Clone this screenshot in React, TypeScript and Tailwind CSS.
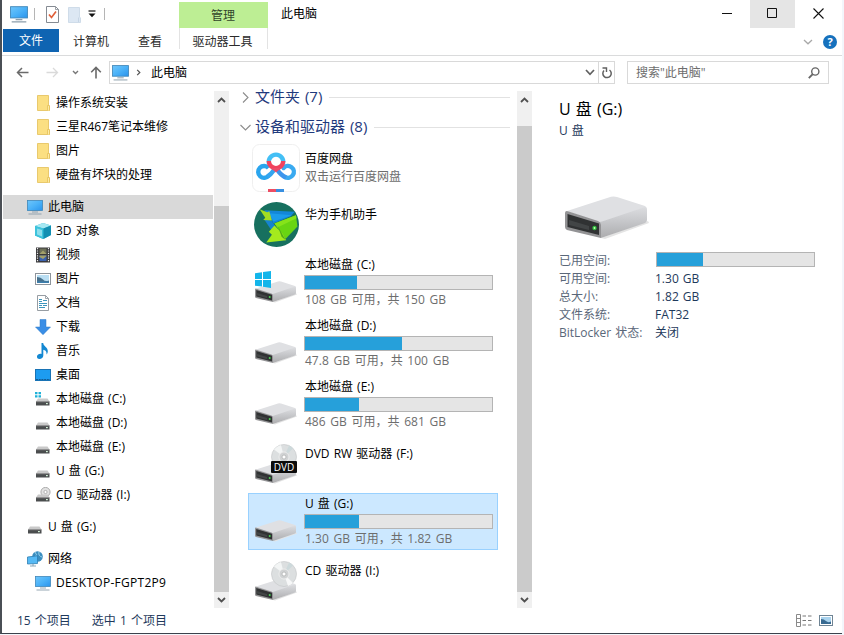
import type { ReactNode } from "react";
import clsx from "clsx";

function Monitor({ className }: { className?: string }) {
  return (
    <svg viewBox="0 0 16 16" className={clsx("shrink-0", className)}>
      <defs>
        <linearGradient id="screen" x1="0" y1="0" x2="1" y2="1">
          <stop offset="0" stopColor="#6fc6fb" />
          <stop offset="0.5" stopColor="#4bb2f8" />
          <stop offset="1" stopColor="#2a93ec" />
        </linearGradient>
      </defs>
      <rect x="0.5" y="1.5" width="15" height="10" fill="url(#screen)" stroke="#4087b8" strokeWidth="0.8" />
      <path d="M5 13h6M1.5 15h13" stroke="#8b9dab" strokeWidth="0.9" />
    </svg>
  );
}

// Drawn in an 84x44 box so that it can be placed inside the larger icons too
function DriveShape() {
  return (
    <g>
      <defs>
        <linearGradient id="driveSide" x1="0" y1="0" x2="0" y2="1">
          <stop offset="0" stopColor="#dcdde0" />
          <stop offset="0.5" stopColor="#c4c5c8" />
          <stop offset="1" stopColor="#acacae" />
        </linearGradient>
      </defs>
      <path d="M36 42 83 25 84 27 40 43Z" fill="#e4e4e4" />
      <path d="M2 15 46 .8Q49 0 52 1L80 10Q82 11 82 14L37 28 33 26Z" fill="#dfe0e3" />
      <path d="M34 26Q37 25.500 40 24.500L80 11Q82 11.500 82 14V24Q82 26 80 27L36 42Z" fill="url(#driveSide)" />
      <path d="M0 17Q0 14.500 3 15.300L33 25Q36 26.500 36 29V42L2 34Q0 33 0 31Z" fill="#939395" />
      <path d="M2.500 18 34 27.500V39L2.500 31Z" fill="#303233" />
      <path d="M4 24 24 30V34L4 29Z" fill="#424546" />
      <circle cx="29.500" cy="32" r="2.200" fill="#2fbd3c" />
      <circle cx="29.500" cy="32" r="0.900" fill="#c6ffb8" />
    </g>
  );
}

function Disc() {
  return (
    <g>
      <circle cx="31" cy="22" r="12.500" fill="#dcdfe0" stroke="#c2c5c6" strokeWidth="0.600" />
      <path d="M31 22 21 14.500A12.500 12.500 0 0 1 28 9.900Z" fill="#f3f5f5" />
      <path d="M31 22 40 31A12.500 12.500 0 0 1 35 34Z" fill="#f7f8f8" />
      <path d="M31 22 36 10.500A12.500 12.500 0 0 1 40 13.500Z" fill="#cdd9db" />
      <circle cx="31" cy="22" r="5" fill="#d0d2d3" stroke="#f0f0f0" strokeWidth="0.800" />
      <circle cx="31" cy="22" r="2" fill="#fff" stroke="#aaadae" strokeWidth="0.700" />
    </g>
  );
}

function DriveIcon({ kind }: { kind?: string }) {
  return (
    <svg viewBox="0 0 44 50" className="h-[50px] w-[44px]">
      <g transform="translate(2 27) scale(.5)">
        <DriveShape />
      </g>
      {(kind === "cd" || kind === "dvd") && <Disc />}
      {kind === "dvd" && (
        <>
          <rect x="18" y="26" width="26" height="12" rx="1" fill="#0c0c0c" />
          <text x="31" y="35.500" textAnchor="middle" fontSize="10" fill="#fff" fontFamily="Open Sans, sans-serif">
            DVD
          </text>
        </>
      )}
      {kind === "windows" && (
        <path d="M2 19.200 9 18.200V25H2ZM10 18.100 18 17V25H10ZM2 26H9V32.600L2 31.700ZM10 26H18V34L10 32.800Z" fill="#13b5ea" />
      )}
    </svg>
  );
}

function BaiduIcon() {
  return (
    <svg viewBox="0 0 48 48" className="h-12 w-12">
      <rect x="0.500" y="0.500" width="47" height="47" rx="7" fill="#fff" stroke="#efefef" />
      <g fill="none" strokeWidth="4.400">
        <path d="M16.800 31.500A5.900 5.900 0 1 1 16.500 24" stroke="#2aa5ee" />
        <path d="M31.500 24A5.900 5.900 0 1 1 33 33" stroke="#3aaaf0" strokeLinecap="round" />
        <path d="M15.500 32.500Q19 30.500 22 26" stroke="#35a5ef" />
        <path d="M25.500 26Q29 31.500 34 33.500" stroke="#3d95ec" />
        <path d="M17 19.500A7.200 7.200 0 1 1 31 19.500" stroke="#43bff5" />
        <path d="M16.800 17A7.200 7.200 0 0 0 31.200 17" stroke="#f0435e" />
      </g>
      <path d="M19 24 24 28.500 29 24Z" fill="#ec4b69" />
      <path d="M16 45H24V48H16Z" fill="#ed4d63" />
      <path d="M24 45H32V48H24Z" fill="#388fe0" />
    </svg>
  );
}

function HuaweiIcon() {
  return (
    <svg viewBox="0 0 44 44" className="h-[45px] w-[45px]">
      <circle cx="22" cy="22" r="22" fill="#17705f" />
      <path d="M10 8 40 9.500 36 14 19 21 15 14Z" fill="#1387d8" />
      <path d="M15 11 37 13 19 19Z" fill="#1b9cea" />
      <path d="M10 17 17 18 21 24 18 29Z" fill="#1583cf" />
      <path d="M20 21 41 13 42.500 24 31 36 24 27Z" fill="#68d512" />
      <path d="M20 21 41 13 41.500 16 23 25Z" fill="#86e31a" />
      <path d="M5.500 7 13 10 15 9 17.500 18 9 17.500 11 15.500Z" fill="#a4dc22" />
      <path d="M20 23 28 31 31.500 37.500 12 39.500 17.500 32 14.500 29Z" fill="#a5ea1d" />
      <path d="M23 23 31 37.500 27 34Z" fill="#4eae16" />
    </svg>
  );
}

function SmallDrive({ kind }: { kind?: string }) {
  return (
    <svg viewBox="0 0 16 16" className="h-4 w-4">
      {kind === "cd" && (
        <>
          <circle cx="10.500" cy="5" r="4.600" fill="#e2e2e2" stroke="#9a9a9a" strokeWidth="0.800" />
          <circle cx="10.500" cy="5" r="1.600" fill="#fff" stroke="#9a9a9a" strokeWidth="0.700" />
        </>
      )}
      {kind === "windows" && <path d="M0 1H2.500V3.300H0ZM3.500 1H6V3.300H3.500ZM0 4.300H2.500V6.600H0ZM3.500 4.300H6V6.600H3.500Z" fill="#1fb1d8" />}
      <path d="M3 7.500H12.500L14.500 10.500H1Z" fill="#c9c9c9" />
      <path d="M1 10.500H14.500V14.500H1Z" fill="#4a4d4e" />
      <path d="M1 10.500H14.500V11.200H1Z" fill="#8a8a8a" />
      <rect x="11" y="12" width="1.800" height="1.200" fill="#d8f5dc" />
    </svg>
  );
}

const icons: Record<string, ReactNode> = {
  folder: (
    <svg viewBox="0 0 16 16" className="h-4 w-4">
      <path d="M2.500 .5H13.500V11L14.500 11.500V15.500H2.500Z" fill="#fbdf82" stroke="#e3bf58" strokeWidth="0.800" />
      <path d="M12.500 15.500V10.500H14.500V15.500" fill="#fdeaa4" stroke="#e3bf58" strokeWidth="0.800" />
    </svg>
  ),
  pc: <Monitor className="h-4 w-4" />,
  cube: (
    <svg viewBox="0 0 16 16" className="h-4 w-4">
      <path d="M0 3 8 0 16 2.500V12L8 16 0 12.500Z" fill="#28b2cf" />
      <path d="M0 3 8 0 16 2.500 8.500 5.500Z" fill="#a6e8f2" />
      <path d="M0 3 8.500 5.500V16L0 12.500Z" fill="#3cc3dc" />
      <path d="M2 5.500 7 7V13.500L2 11.500Z" fill="#8cdeec" />
      <path d="M8.500 5.500 16 2.500V12L8.500 16Z" fill="#128fb2" />
    </svg>
  ),
  video: (
    <svg viewBox="0 0 16 16" className="h-4 w-4">
      <rect x="1" y="0.500" width="14" height="15" fill="#3a3a3c" />
      <path d="M2.500 1V15M13.500 1V15" stroke="#eee" strokeWidth="1.200" strokeDasharray="1.200 1.200" />
      <rect x="4.500" y="1.500" width="7" height="5.500" fill="#6d7058" />
      <rect x="4.500" y="8.500" width="7" height="5.500" fill="#3a62b0" />
      <path d="M4.500 7 8 3.500 11.500 7ZM4.500 10 8 12 11.500 9V8.500H4.500Z" fill="#a3a06a" />
    </svg>
  ),
  picture: (
    <svg viewBox="0 0 16 16" className="h-4 w-4">
      <rect x="0.500" y="2.500" width="15" height="11" fill="#fff" stroke="#8d949b" />
      <rect x="2" y="4" width="12" height="8" fill="#b9def3" />
      <path d="M2 6Q6 6 8 8.500T14 9.500V12H2Z" fill="#46708c" />
      <path d="M2 10.500H14V12H2Z" fill="#3c7fae" />
    </svg>
  ),
  doc: (
    <svg viewBox="0 0 16 16" className="h-4 w-4">
      <path d="M2.500 .5H10.500L13.500 3.500V15.500H2.500Z" fill="#fff" stroke="#8b9299" strokeWidth="0.900" />
      <path d="M10.500 .5V3.500H13.500" fill="none" stroke="#8b9299" strokeWidth="0.800" />
      <path d="M4 4.500H7M8 5.500H12M4 6.500H7M4 8.500H12M4 10.500H7M8 10.500H12M4 12.500H10" stroke="#3c96bd" strokeWidth="1" />
    </svg>
  ),
  download: (
    <svg viewBox="0 0 16 16" className="h-4 w-4">
      <path d="M5 .5H11V8H15.500L8 15.700 .5 8H5Z" fill="#3a8ee6" stroke="#2d78c6" strokeWidth="0.500" />
    </svg>
  ),
  music: (
    <svg viewBox="0 0 16 16" className="h-4 w-4">
      <path d="M6.500 0H8.200C8.500 3.500 13 4 12.800 8.500 12.700 10 12 11 11.500 11.500 12 8.500 10 7 8.300 6.800V12.500C8.300 14.700 6.500 16 4.500 16S1.800 14.800 2 13.300C2.300 11.500 4.500 10.400 6.500 11Z" fill="#1488d2" />
    </svg>
  ),
  desktop: (
    <svg viewBox="0 0 16 16" className="h-4 w-4">
      <rect x="0.500" y="2.500" width="15" height="11" fill="#1d9cf0" stroke="#1873b5" />
      <path d="M1 12.500H15" stroke="#135c94" strokeDasharray="2 .7" />
    </svg>
  ),
  windows: <SmallDrive kind="windows" />,
  drive: <SmallDrive />,
  cd: <SmallDrive kind="cd" />,
  network: (
    <svg viewBox="0 0 16 16" className="h-4 w-4">
      <circle cx="10.500" cy="5.500" r="5.300" fill="#3a8ec0" />
      <path d="M8 1Q11 4 8 6M12 1Q11 5 15 6" stroke="#a6d8ee" strokeWidth="0.900" fill="none" />
      <path d="M.5 6 10.500 4.800V12.500L.5 13Z" fill="#55b9f4" stroke="#2f7fb3" strokeWidth="0.800" />
      <path d="M3 15H9M6 13V15" stroke="#7d9db0" strokeWidth="0.900" />
    </svg>
  ),
};

const tree = [
  { icon: "folder", label: "操作系统安装", depth: 1 },
  { icon: "folder", label: "三星R467笔记本维修", depth: 1 },
  { icon: "folder", label: "图片", depth: 1 },
  { icon: "folder", label: "硬盘有坏块的处理", depth: 1 },
  { icon: "pc", label: "此电脑", depth: 0, active: true },
  { icon: "cube", label: "3D 对象", depth: 1 },
  { icon: "video", label: "视频", depth: 1 },
  { icon: "picture", label: "图片", depth: 1 },
  { icon: "doc", label: "文档", depth: 1 },
  { icon: "download", label: "下载", depth: 1 },
  { icon: "music", label: "音乐", depth: 1 },
  { icon: "desktop", label: "桌面", depth: 1 },
  { icon: "windows", label: "本地磁盘 (C:)", depth: 1 },
  { icon: "drive", label: "本地磁盘 (D:)", depth: 1 },
  { icon: "drive", label: "本地磁盘 (E:)", depth: 1 },
  { icon: "drive", label: "U 盘 (G:)", depth: 1 },
  { icon: "cd", label: "CD 驱动器 (I:)", depth: 1 },
  { icon: "drive", label: "U 盘 (G:)", depth: 0 },
  { icon: "network", label: "网络", depth: 0 },
  { icon: "pc", label: "DESKTOP-FGPT2P9", depth: 1, spaced: true },
];

const drives = [
  { name: "本地磁盘 (C:)", kind: "windows", used: 28, info: "108 GB 可用，共 150 GB", height: "h-[61px]" },
  { name: "本地磁盘 (D:)", used: 52, info: "47.8 GB 可用，共 100 GB", height: "h-[61px]" },
  { name: "本地磁盘 (E:)", used: 29, info: "486 GB 可用，共 681 GB", height: "h-[59px]" },
  { name: "DVD RW 驱动器 (F:)", kind: "dvd", height: "h-[58px]" },
  { name: "U 盘 (G:)", used: 29, info: "1.30 GB 可用，共 1.82 GB", height: "h-[57px]", selected: true },
  { name: "CD 驱动器 (I:)", kind: "cd", height: "h-[56px]" },
];

const details = [
  { label: "可用空间:", value: "1.30 GB" },
  { label: "总大小:", value: "1.82 GB" },
  { label: "文件系统:", value: "FAT32" },
  { label: "BitLocker 状态:", value: "关闭" },
];

function UsageBar({ used, className }: { used: number; className?: string }) {
  return (
    <div className={clsx("h-[15px] border border-[#b4b4b4] bg-[#e5e5e5]", className)}>
      <div className="h-full bg-[#26a0da]" style={{ width: `${used}%` }} />
    </div>
  );
}

function ScrollBar({ thumbTop }: { thumbTop: string }) {
  return (
    <div className="flex h-[517px] w-[15px] shrink-0 flex-col bg-[#f0f0f0]">
      <div className={clsx("flex shrink-0 justify-center pt-[6px]", thumbTop)}>
        <svg viewBox="0 0 9 6" className="h-[6px] w-[9px]">
          <path d="M1 5 4.500 1.500 8 5" fill="none" stroke="#505050" strokeWidth="1.800" />
        </svg>
      </div>
      <div className="flex-1 bg-[#cbcbcb]" />
      <div className="flex h-4 shrink-0 items-center justify-center">
        <svg viewBox="0 0 9 6" className="h-[6px] w-[9px]">
          <path d="M1 1 4.500 4.500 8 1" fill="none" stroke="#505050" strokeWidth="1.800" />
        </svg>
      </div>
    </div>
  );
}

function TitleBar() {
  return (
    <div className="flex h-7 shrink-0">
      <div className="flex w-[177px] items-center pl-2">
        <Monitor className="h-[18px] w-[18px]" />
        <div className="ml-[6px] h-3 w-px bg-[#b5b5b5]" />
        <svg viewBox="0 0 13 17" className="ml-[11px] h-[17px] w-[13px]">
          <path d="M.5 .5H9.500L12.500 3.500V16.500H.5Z" fill="#fff" stroke="#858b93" />
          <path d="M9.500 .5V3.500H12.500" fill="none" stroke="#858b93" strokeWidth="0.800" />
          <path d="M3 8.500 5.500 11.500 10 5.500" fill="none" stroke="#e0603a" strokeWidth="1.700" />
        </svg>
        <svg viewBox="0 0 13 17" className="ml-[9px] h-[17px] w-[13px]">
          <path d="M.5 1.500H11.500V11L12.500 12V16.500H.5Z" fill="#dce7f3" stroke="#c6d5e5" strokeWidth="0.800" />
          <path d="M10.500 16V11.500" stroke="#c0d0e1" strokeWidth="0.800" />
        </svg>
        <svg viewBox="0 0 8 8" className="ml-[7px] h-2 w-2">
          <path d="M.5 1H7.500" stroke="#111" strokeWidth="1.200" />
          <path d="M.5 3.500H7.500L4 7.200Z" fill="#111" />
        </svg>
        <div className="ml-2 h-3 w-px bg-[#b5b5b5]" />
      </div>
      <div className="mt-[2px] w-[89px] bg-[#bdee94] pt-[5px] pr-px text-center text-[#31452b]">管理</div>
      <div className="flex-1 pt-[5px] pl-[13px]">此电脑</div>
      <div className="flex w-[46px] items-center justify-center">
        <svg viewBox="0 0 11 11" className="mb-px h-[11px] w-[11px]">
          <path d="M0 5.500H10" stroke="#111" />
        </svg>
      </div>
      <div className="flex w-[45px] items-center justify-center bg-[#e5e5e5]">
        <svg viewBox="0 0 11 11" className="mb-px h-[11px] w-[11px]">
          <path d="M.5 .5H9.500V9.500H.5Z" fill="none" stroke="#111" />
        </svg>
      </div>
      <div className="flex w-[47px] items-center justify-center">
        <svg viewBox="0 0 11 11" className="mb-px h-[11px] w-[11px]">
          <path d="M.5 .5 10.500 10.500M10.500 .5 .5 10.500" stroke="#111" strokeWidth="1.100" />
        </svg>
      </div>
    </div>
  );
}

function RibbonTabs() {
  return (
    <div className="flex h-7 shrink-0 border-b border-[#dadbdc] pl-px text-[#2b2b2b]">
      <div className="mt-px h-[23px] w-14 bg-[#0f64b2] pt-[3px] text-center text-white">文件</div>
      <div className="w-16 pt-[5px] text-center">计算机</div>
      <div className="w-14 pt-[5px] pr-[2px] text-center">查看</div>
      <div className="h-[21px] w-[89px] border-x border-[#e3e3e3] pt-[5px] pr-[2px] text-center">驱动器工具</div>
      <div className="flex flex-1 items-center justify-end gap-[10px] pr-[5px]">
        <svg viewBox="0 0 10 6" className="h-[6px] w-[10px]">
          <path d="M1 1 5 4.800 9 1" fill="none" stroke="#a8a8a8" strokeWidth="1.300" />
        </svg>
        <div className="h-[14px] w-[14px] rounded-full bg-[#1671bd] text-center text-[11px] leading-[14px] font-bold text-white">?</div>
      </div>
    </div>
  );
}

function AddressBar() {
  return (
    <div className="flex h-[35px] shrink-0 items-start pt-[5px]">
      <div className="flex h-[23px] w-[107px] items-center pl-[14px]">
        <svg viewBox="0 0 13 11" className="h-[11px] w-[13px]">
          <path d="M12.500 5.500H1.500M6 1 1.500 5.500 6 10" fill="none" stroke="#6a6a6a" strokeWidth="1.500" />
        </svg>
        <svg viewBox="0 0 13 11" className="ml-[17px] h-[11px] w-[13px]">
          <path d="M.5 5.500H11.500M7 1 11.500 5.500 7 10" fill="none" stroke="#dadada" strokeWidth="1.300" />
        </svg>
        <svg viewBox="0 0 7 5" className="ml-[13px] h-[5px] w-[7px]">
          <path d="M1 1 3.500 3.500 6 1" fill="none" stroke="#777" strokeWidth="1.400" />
        </svg>
        <svg viewBox="0 0 12 13" className="ml-[11px] h-[13px] w-[12px]">
          <path d="M6 12.500V1.500M1.200 6.300 6 1.500 10.800 6.300" fill="none" stroke="#6a6a6a" strokeWidth="1.600" />
        </svg>
      </div>
      <div className="flex h-[23px] w-[506px] items-center border border-[#d9d9d9] pl-[2px]">
        <Monitor className="h-[17px] w-[17px]" />
        <svg viewBox="0 0 5 8" className="ml-[7px] h-[7px] w-[5px]">
          <path d="M1 1 4 4 1 7" fill="none" stroke="#555" strokeWidth="1.400" />
        </svg>
        <span className="ml-[10px] flex-1">此电脑</span>
        <svg viewBox="0 0 10 7" className="mr-[3px] h-[7px] w-[10px]">
          <path d="M1 1 5 5.300 9 1" fill="none" stroke="#606060" strokeWidth="1.700" />
        </svg>
        <div className="flex h-full w-[16px] items-center justify-center border-l border-[#d9d9d9]">
          <svg viewBox="0 0 12 12" className="h-3 w-3 shrink-0">
            <path d="M3 3.500A4.200 4.200 0 1 0 8.500 3" fill="none" stroke="#606060" strokeWidth="1.500" />
            <path d="M1.500 1H5.500V5" fill="none" stroke="#606060" strokeWidth="1.400" />
          </svg>
        </div>
      </div>
      <div className="ml-3 flex h-[23px] w-[202px] items-center justify-between border border-[#d9d9d9] pr-2 pl-2 text-[#6d6d6d]">
        <span>搜索"此电脑"</span>
        <svg viewBox="0 0 12 12" className="h-3 w-3">
          <circle cx="7.300" cy="4.500" r="3.600" fill="none" stroke="#666" strokeWidth="1.400" />
          <path d="M4.700 7.200 .8 11.200" stroke="#666" strokeWidth="1.900" />
        </svg>
      </div>
    </div>
  );
}

function Sidebar() {
  return (
    <nav className="w-[212px] pl-px">
      {tree.map((node, i) => (
        <div
          key={i}
          className={clsx(
            "mr-px flex h-6 items-center gap-[5px] whitespace-nowrap",
            node.depth === 0 ? "mt-2 pl-6" : "pl-8",
            node.active && "bg-[#d9d9d9]"
          )}
        >
          {icons[node.icon]}
          <span className={clsx(node.spaced && "tracking-[0.28px]")}>{node.label}</span>
        </div>
      ))}
    </nav>
  );
}

function GroupHeader({ title, open }: { title: string; open?: boolean }) {
  return (
    <div className="flex h-[30px] items-center pr-[7px] pl-[10px] text-[15px] text-[#1f3a7d]">
      <svg viewBox="0 0 11 11" className="mr-1 h-[11px] w-[11px]">
        <path d={open ? "M.5 3 5.500 8 10.500 3" : "M3 .5 8 5.500 3 10.500"} fill="none" stroke="#8c8c8c" strokeWidth="1.100" />
      </svg>
      <span className="pb-[2px]">{title}</span>
      <div className="ml-[7px] h-px flex-1 bg-[#e2e2e2]" />
    </div>
  );
}

function FileList() {
  return (
    <main className="w-[287px]">
      <div className="-mt-[9px]">
        <GroupHeader title="文件夹 (7)" />
        <GroupHeader title="设备和驱动器 (8)" open />
      </div>
      <div className="mt-[2px] flex h-[58px] pl-[22px]">
        <BaiduIcon />
        <div className="pt-[6px] pl-[5px]">
          <div>百度网盘</div>
          <div className="text-[#6d6d6d]">双击运行百度网盘</div>
        </div>
      </div>
      <div className="flex h-[52px] pl-6">
        <HuaweiIcon />
        <div className="pt-1 pl-[6px]">华为手机助手</div>
      </div>
      {drives.map((drive) => (
        <div
          key={drive.name}
          className={clsx(
            "ml-[18px] flex w-[250px]",
            drive.height,
            drive.selected && "mb-[2px] bg-[#cce8ff] outline -outline-offset-1 outline-[#99d1ff]"
          )}
        >
          <div className="w-[56px] pl-[5px]">
            <DriveIcon kind={drive.kind} />
          </div>
          {drive.used ? (
            <div className="pt-[2px]">
              <div className="pl-px">{drive.name}</div>
              <UsageBar used={drive.used} className="mt-px w-[189px]" />
              <div className="mt-px pl-px text-[#6d6d6d] [word-spacing:1.6px]">{drive.info}</div>
            </div>
          ) : (
            <div className="pt-[10px] pl-px">{drive.name}</div>
          )}
        </div>
      ))}
    </main>
  );
}

function DetailsPane() {
  return (
    <aside className="flex-1 pt-[6px] pl-[27px]">
      <h2 className="text-base leading-6">U 盘 (G:)</h2>
      <div className="mt-px text-[#1e395b]">U 盘</div>
      <svg viewBox="0 0 84 44" className="mt-14 ml-[6px] h-[44px] w-[84px]">
        <DriveShape />
      </svg>
      <div className="mt-3 grid grid-cols-[96px_1fr] text-[#1e395b]">
        <div className="text-[#5a6779]">已用空间:</div>
        <UsageBar used={29.5} className="ml-px w-[159px]" />
        {details.map((row) => (
          <div key={row.label} className="contents">
            <div className="whitespace-nowrap text-[#5a6779]">{row.label}</div>
            <div>{row.value}</div>
          </div>
        ))}
      </div>
    </aside>
  );
}

function StatusBar() {
  return (
    <footer className="flex h-[25px] shrink-0 items-center pr-[9px] pl-[15px] text-[#1e395b]">
      <span>15 个项目</span>
      <span className="ml-[21px]">选中 1 个项目</span>
      <svg viewBox="0 0 16 13" className="ml-auto h-[13px] w-4">
        <path d="M.5 .5H4.500V12.500H.5ZM.5 4.500H4.500M.5 8.500H4.500" fill="none" stroke="#8a8a8a" />
        <path d="M6.500 2H10M12 2H15.500M6.500 6.500H10M12 6.500H15.500M6.500 11H10M12 11H15.500" stroke="#777" />
      </svg>
      <svg viewBox="0 0 14 11" className="ml-[7px] h-[11px] w-[14px]">
        <rect x="0.500" y="0.500" width="13" height="10" fill="#fff" stroke="#6f8494" />
        <rect x="2" y="2" width="10" height="7" fill="#a9d3ee" />
        <path d="M2 4Q5 4 7 6T12 6.500V9H2Z" fill="#386a91" />
      </svg>
    </footer>
  );
}

export default function App() {
  return (
    <div className="h-[635px] w-[844px] overflow-hidden bg-[#f3f6fb] pr-[2px] font-['Open_Sans','Noto_Sans_CJK_SC',sans-serif] text-[12px] leading-[18px] text-black [word-spacing:1px]">
      <div className="flex h-[634px] flex-col border-b border-l-2 border-b-[#3b424c] border-l-[#4a4f55] bg-white">
        <TitleBar />
        <RibbonTabs />
        <AddressBar />
        <div className="flex h-[517px] shrink-0">
          <Sidebar />
          <ScrollBar thumbTop="h-[115px]" />
          <div className="w-px shrink-0" />
          <FileList />
          <ScrollBar thumbTop="h-[35px]" />
          <DetailsPane />
        </div>
        <StatusBar />
      </div>
    </div>
  );
}
